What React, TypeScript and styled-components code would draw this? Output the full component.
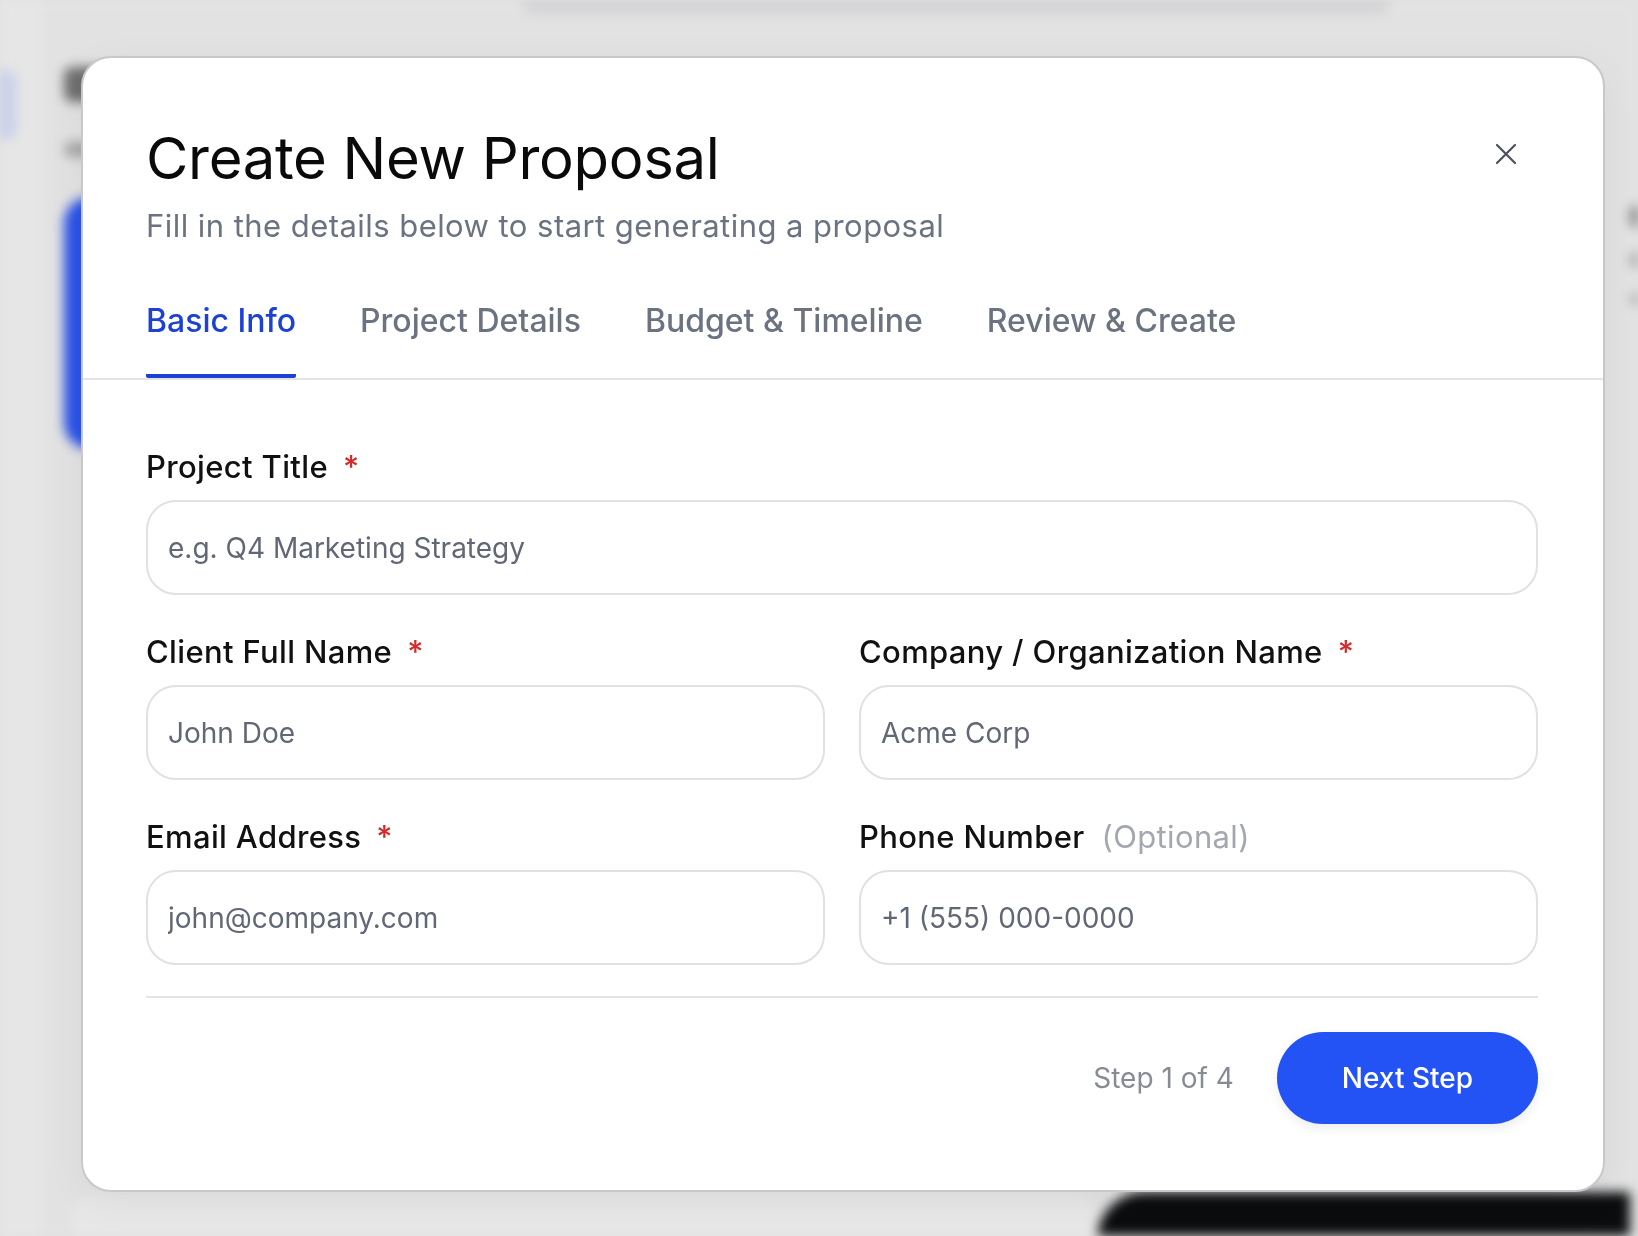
import React from "react";
import styled, { createGlobalStyle } from "styled-components";

const GlobalStyle = createGlobalStyle`
  html, body {
    margin: 0;
    padding: 0;
    height: 100%;
    overflow: hidden;
    background: #e2e2e2;
  }
  body {
    font-family: Inter, "Noto Sans", "Liberation Sans", sans-serif;
    -webkit-font-smoothing: antialiased;
  }
  * { box-sizing: border-box; }
`;

/* ---------- blurred app behind the dialog ---------- */

const Backdrop = styled.div`
  height: 100vh;
  background: #e2e2e2;
  display: grid;
  grid-template-columns: 42px 1fr;
  filter: blur(6px);
  overflow: hidden;
`;

const SideRail = styled.aside`
  background: #e6e6e6;
  padding-top: 70px;
`;

const RailChip = styled.div`
  width: 16px;
  height: 70px;
  background: #c7d0ea;
  border-radius: 0 10px 10px 0;
`;

const Workspace = styled.main`
  display: flex;
  flex-direction: column;
  padding-left: 22px;
`;

const TopStrip = styled.div`
  height: 14px;
  display: flex;
`;

const SearchPill = styled.div`
  margin-left: 458px;
  width: 868px;
  height: 14px;
  background: #d2d2d5;
  border-radius: 0 0 12px 12px;
`;

const PageHead = styled.div`
  margin-top: 53px;
  display: flex;
  flex-direction: column;
  gap: 40px;
`;

const HeadBar = styled.div<{ $w: number; $h: number; $tone: string }>`
  width: ${(p) => p.$w}px;
  height: ${(p) => p.$h}px;
  background: ${(p) => p.$tone};
  border-radius: 8px;
`;

const BodyGrid = styled.div`
  margin-top: 40px;
  display: grid;
  grid-template-columns: 1033px 533px 1fr;
  flex: 1;
`;

const LeftCol = styled.div`
  display: flex;
  flex-direction: column;
`;

const BlueCard = styled.div`
  width: 520px;
  height: 252px;
  background: #2a52e6;
  border-radius: 26px;
`;

const SoftCard = styled.div`
  margin: 743px 0 0 10px;
  height: 120px;
  background: #e7e7e7;
  border-radius: 24px;
`;

const MidCol = styled.div`
  display: flex;
  flex-direction: column;
`;

const DarkCard = styled.div`
  margin-top: 995px;
  height: 200px;
  background: #0b0c0e;
  border-radius: 48px 0 0 0;
`;

const RightCol = styled.div`
  display: flex;
  flex-direction: column;
  padding-top: 8px;
  gap: 24px;
`;

/* ---------- dialog ---------- */

const Overlay = styled.div`
  position: fixed;
  inset: 0;
  padding: 56px 0 0 81px;
`;

const Dialog = styled.section`
  width: 1524px;
  background: #ffffff;
  border: 2px solid #c8c8c8;
  border-radius: 30px;
  box-shadow: 0 10px 40px rgba(0, 0, 0, 0.05);
  color: #0a0a0a;
`;

const Header = styled.header`
  padding: 64px 65px 0 63px;
  display: flex;
  justify-content: space-between;
  align-items: flex-start;
`;

const TitleBlock = styled.div`
  display: flex;
  flex-direction: column;
  gap: 12px;
`;

const Title = styled.h1`
  margin: 0;
  font-size: 58px;
  line-height: 72px;
  font-weight: 400;
  letter-spacing: -0.3px;
  color: #0a0a0a;
`;

const Subtitle = styled.p`
  margin: 0;
  font-size: 31px;
  line-height: 40px;
  font-weight: 400;
  letter-spacing: 0.45px;
  color: #6b7280;
`;

const CloseButton = styled.button`
  width: 64px;
  height: 64px;
  border: none;
  background: transparent;
  padding: 0;
  display: flex;
  align-items: center;
  justify-content: center;
  color: #4b5060;
  cursor: pointer;
`;

const TabList = styled.nav`
  margin-top: 55px;
  padding: 0 63px;
  display: flex;
  gap: 64px;
  border-bottom: 2px solid #e3e4e9;
`;

const Tab = styled.button<{ $active?: boolean }>`
  border: none;
  background: transparent;
  padding: 0 0 33px;
  font-family: inherit;
  font-size: 32px;
  line-height: 40px;
  font-weight: 500;
  color: ${(p) => (p.$active ? "#1d42d3" : "#6b7280")};
  border-bottom: 4px solid ${(p) => (p.$active ? "#1d42d3" : "transparent")};
  border-radius: 2px;
  cursor: pointer;
`;

const Form = styled.div`
  padding: 69px 65px 0 63px;
  display: grid;
  grid-template-columns: 1fr 1fr;
  column-gap: 34px;
  row-gap: 39px;
`;

const Field = styled.label<{ $wide?: boolean }>`
  display: flex;
  flex-direction: column;
  gap: 15px;
  grid-column: ${(p) => (p.$wide ? "1 / -1" : "auto")};
`;

const LabelText = styled.span`
  font-size: 31px;
  line-height: 36px;
  font-weight: 500;
  letter-spacing: 0.35px;
  color: #111111;
`;

const Required = styled.span`
  margin-left: 15px;
  color: #d42a2a;
  font-weight: 500;
`;

const Optional = styled.span`
  margin-left: 17px;
  color: #a3a7b0;
  font-weight: 400;
`;

const TextInput = styled.input`
  height: 95px;
  width: 100%;
  border: 2px solid #e0e0e6;
  border-radius: 30px;
  padding: 0 20px;
  font-family: inherit;
  font-size: 28px;
  color: #111;
  background: #fff;
  outline: none;

  &::placeholder {
    color: #626775;
  }
`;

const Footer = styled.footer`
  margin: 31px 65px 0 63px;
  padding: 34px 0 66px;
  border-top: 2px solid #e3e4e9;
  display: flex;
  justify-content: flex-end;
  align-items: center;
  gap: 43px;
`;

const StepNote = styled.span`
  font-size: 28px;
  color: #878b95;
`;

const PrimaryButton = styled.button`
  height: 92px;
  padding: 0 65px;
  border: none;
  border-radius: 46px;
  background: #2352f5;
  color: #ffffff;
  font-family: inherit;
  font-size: 28px;
  font-weight: 500;
  box-shadow: 0 4px 12px rgba(0, 0, 0, 0.08);
  cursor: pointer;
`;

const CloseIcon = () => (
  <svg width="24" height="24" viewBox="0 0 24 24" fill="none" aria-hidden="true">
    <path
      d="M3 3 L21 21 M21 3 L3 21"
      stroke="currentColor"
      strokeWidth="2.2"
      strokeLinecap="round"
    />
  </svg>
);

const tabs = ["Basic Info", "Project Details", "Budget & Timeline", "Review & Create"];

export default function App() {
  return (
    <>
      <GlobalStyle />
      <Backdrop aria-hidden="true">
        <SideRail>
          <RailChip />
        </SideRail>
        <Workspace>
          <TopStrip>
            <SearchPill />
          </TopStrip>
          <PageHead>
            <HeadBar $w={260} $h={35} $tone="#6e6e6e" />
            <HeadBar $w={380} $h={15} $tone="#a4a4a4" />
          </PageHead>
          <BodyGrid>
            <LeftCol>
              <BlueCard />
              <SoftCard />
            </LeftCol>
            <MidCol>
              <DarkCard />
            </MidCol>
            <RightCol>
              <HeadBar $w={80} $h={23} $tone="#7a7a7a" />
              <HeadBar $w={80} $h={16} $tone="#9a9a9a" />
              <HeadBar $w={80} $h={14} $tone="#a8a8a8" />
            </RightCol>
          </BodyGrid>
        </Workspace>
      </Backdrop>

      <Overlay>
        <Dialog role="dialog" aria-labelledby="proposal-title">
          <Header>
            <TitleBlock>
              <Title id="proposal-title">Create New Proposal</Title>
              <Subtitle>Fill in the details below to start generating a proposal</Subtitle>
            </TitleBlock>
            <CloseButton aria-label="Close">
              <CloseIcon />
            </CloseButton>
          </Header>

          <TabList>
            {tabs.map((t, i) => (
              <Tab key={t} $active={i === 0}>
                {t}
              </Tab>
            ))}
          </TabList>

          <Form>
            <Field $wide>
              <LabelText>
                Project Title<Required>*</Required>
              </LabelText>
              <TextInput placeholder="e.g. Q4 Marketing Strategy" />
            </Field>
            <Field>
              <LabelText>
                Client Full Name<Required>*</Required>
              </LabelText>
              <TextInput placeholder="John Doe" />
            </Field>
            <Field>
              <LabelText>
                Company / Organization Name<Required>*</Required>
              </LabelText>
              <TextInput placeholder="Acme Corp" />
            </Field>
            <Field>
              <LabelText>
                Email Address<Required>*</Required>
              </LabelText>
              <TextInput type="email" placeholder="john@company.com" />
            </Field>
            <Field>
              <LabelText>
                Phone Number<Optional>(Optional)</Optional>
              </LabelText>
              <TextInput type="tel" placeholder="+1 (555) 000-0000" />
            </Field>
          </Form>

          <Footer>
            <StepNote>Step 1 of 4</StepNote>
            <PrimaryButton>Next Step</PrimaryButton>
          </Footer>
        </Dialog>
      </Overlay>
    </>
  );
}
